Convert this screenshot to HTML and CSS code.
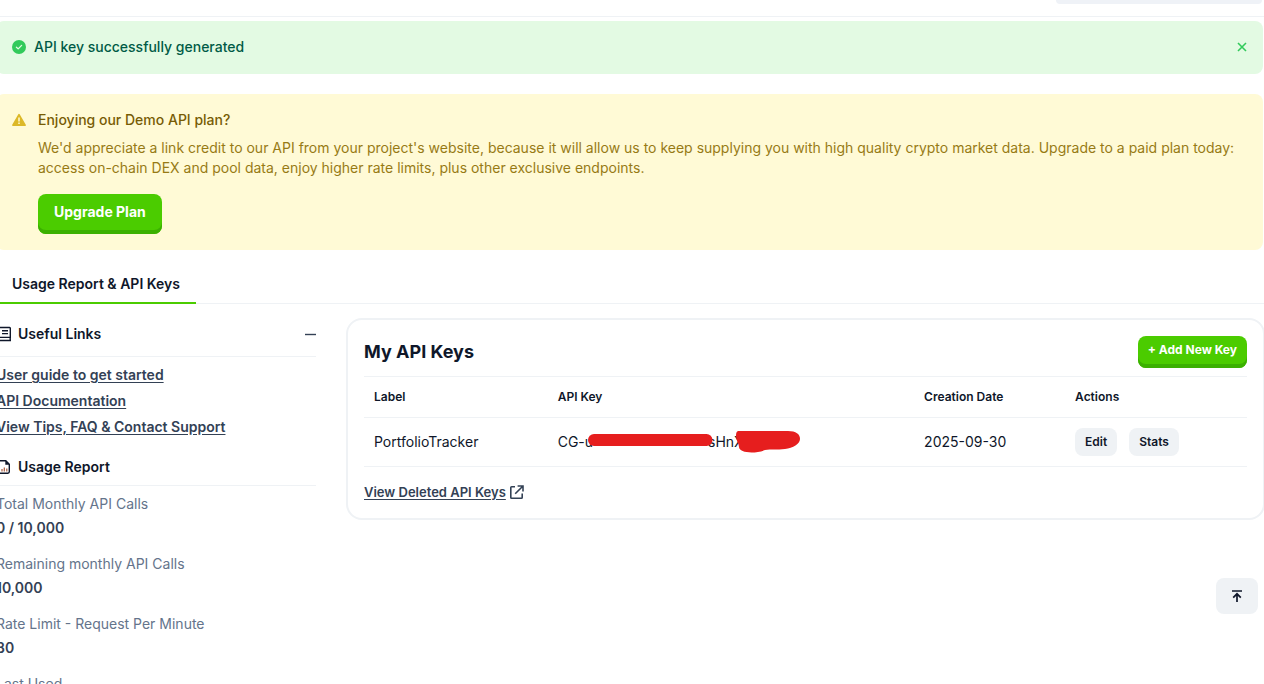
FILE: index.html
```html
<!DOCTYPE html>
<html lang="en">
<head>
<meta charset="utf-8">
<title>Developer Dashboard</title>
<link rel="stylesheet" href="styles.css">
</head>
<body>
<div class="page">
  <header class="topbar"><div class="topbar-search"></div></header>
  <main>
    <div class="alert alert-success" role="status">
      <svg class="icon-alert" viewBox="0 0 14 14" aria-hidden="true"><circle cx="7" cy="7" r="7" fill="#32ca5b"/><path d="M4.4 7.2l1.8 1.7 3.4-3.5" fill="none" stroke="#e3fae3" stroke-width="1.3" stroke-linecap="round" stroke-linejoin="round"/></svg>
      <p class="alert-text">API key successfully generated</p>
      <button class="close" type="button" aria-label="Dismiss"><svg width="10" height="10" viewBox="0 0 10 10" aria-hidden="true"><path d="M1 1l8 8M9 1L1 9" stroke="#32ca5b" stroke-width="1.6" fill="none"/></svg></button>
    </div>
    <section class="alert alert-warning">
      <svg class="icon-alert" viewBox="0 0 14 14" aria-hidden="true"><path d="M7 1.6L13.1 12.2H.9z" fill="#dcb828" stroke="#dcb828" stroke-width="1.6" stroke-linejoin="round"/><path d="M7 4.6v3.8M7 9.6v1.5" stroke="#fffad6" stroke-width="1.5"/></svg>
      <div class="promo">
        <h2 class="promo-title">Enjoying our Demo API plan?</h2>
        <p class="promo-text">We'd appreciate a link credit to our API from your project's website, because it will allow us to keep supplying you with high quality crypto market data. Upgrade to a paid plan today: access on-chain DEX and pool data, enjoy higher rate limits, plus other exclusive endpoints.</p>
        <button class="btn" type="button">Upgrade Plan</button>
      </div>
    </section>
    <nav class="tabs"><a class="tab" href="#usage">Usage Report &amp; API Keys</a></nav>
    <div class="columns" id="usage">
      <aside class="sidebar">
        <div class="side-head links-head">
          <svg width="16" height="16" viewBox="0 0 16 16" fill="none" stroke="#0f172a" stroke-width="1.4" aria-hidden="true"><path d="M14.3 11V2.2a.7.7 0 0 0-.7-.7H4a2 2 0 0 0-2 2v9M15 11.4H3.6a1.5 1.5 0 0 0 0 3.1H15M14.2 11.4v3M6 4.8h6M6 7.6h6"/></svg>
          <h3 class="side-title">Useful Links</h3>
          <button class="collapse" type="button" aria-label="Collapse"><svg width="11" height="10" viewBox="0 0 11 10" aria-hidden="true"><path d="M0 5.5h11" stroke="#334155" stroke-width="1.4"/></svg></button>
        </div>
        <ul class="links">
          <li><a href="#guide">User guide to get started</a></li>
          <li><a href="#docs">API Documentation</a></li>
          <li><a href="#support">View Tips, FAQ &amp; Contact Support</a></li>
        </ul>
        <div class="side-head">
          <svg width="16" height="16" viewBox="0 0 16 16" aria-hidden="true"><path d="M4.4 1.7h5.4l3.5 3.5v7.6a1.4 1.4 0 0 1-1.4 1.4H4.4A1.4 1.4 0 0 1 3 12.8V3.1a1.4 1.4 0 0 1 1.4-1.4z" fill="none" stroke="#0f172a" stroke-width="1.4"/><path d="M9.3 1.5v4.2h4.2z" fill="#0f172a"/><path d="M6 10v2.6M8.3 8.4v4.2M10.8 9.4v3.2" stroke="#a85a3c" stroke-width="1.2"/></svg>
          <h3 class="side-title">Usage Report</h3>
        </div>
        <dl class="stats">
          <div class="stat"><dt>Total Monthly API Calls</dt><dd>0 / 10,000</dd></div>
          <div class="stat"><dt>Remaining monthly API Calls</dt><dd>10,000</dd></div>
          <div class="stat"><dt>Rate Limit - Request Per Minute</dt><dd>30</dd></div>
          <div class="stat"><dt>Last Used</dt><dd>-</dd></div>
        </dl>
      </aside>
      <section class="card">
        <div class="card-head">
          <h2 class="card-title">My API Keys</h2>
          <button class="btn btn-small" type="button">+ Add New Key</button>
        </div>
        <table class="keys">
          <colgroup><col class="col-label"><col class="col-key"><col class="col-date"><col></colgroup>
          <thead><tr><th scope="col">Label</th><th scope="col">API Key</th><th scope="col">Creation Date</th><th scope="col">Actions</th></tr></thead>
          <tbody><tr>
            <td>PortfolioTracker</td>
            <td><div class="key"><span>CG-u</span><span class="key-end">sHnX</span>
              <svg class="redaction" width="214" height="24" viewBox="0 0 214 24" aria-hidden="true"><path d="M6 4H118.500a6 6 0 0 1 0 12H6A6 6 0 0 1 6 4z" fill="#e61e1e"/><path d="M151 1H200C208 1 212 4 212 9C212 14 205 18 197 19C189 20 183 19 177 20C167 24 151 23 151 17C151 14 148 10 148 6C148 2 149 1 151 1z" fill="#e61e1e"/></svg></div></td>
            <td>2025-09-30</td>
            <td><div class="actions"><button class="chip" type="button">Edit</button><button class="chip" type="button">Stats</button></div></td>
          </tr></tbody>
        </table>
        <a class="deleted" href="#deleted"><span class="deleted-text">View Deleted API Keys</span><svg width="14" height="14" viewBox="0 0 14 14" fill="none" stroke="#334155" stroke-width="1.6" aria-hidden="true"><path d="M5 1.8H1.6a.8.8 0 0 0-.8.8v9.8a.8.8 0 0 0 .8.8h9.8a.8.8 0 0 0 .8-.8V8.6M7.6 1h5.4v5.4M13 1L5.2 8.800"/></svg></a>
      </section>
    </div>
  </main>
  <button class="to-top" type="button" aria-label="Back to top"><svg width="12" height="14" viewBox="0 0 12 14" fill="none" stroke="#0f172a" stroke-width="1.7" aria-hidden="true"><path d="M1 2h10M6 13V5M2.2 8.600L6 4.8l3.8 3.8"/></svg></button>
</div>
</body>
</html>
```

FILE: styles.css
```css
* { box-sizing: border-box; }

body {
  margin: 0;
  height: 100vh;
  overflow: hidden;
  background: #fff;
  color: #0f172a;
  font: 400 14px/20px Inter, "Liberation Sans", sans-serif;
}

h2, h3, p, ul, dl, dd { margin: 0; padding: 0; }
button { border: 0; padding: 0; background: none; font: inherit; color: inherit; cursor: pointer; }
svg { flex: none; display: block; }

/* The dashboard bleeds slightly past both edges of the window. */
.page { margin: 0 -1px 0 -4px; }

.topbar { height: 17px; border-bottom: 1px solid #eff2f5; padding-right: 3px; }
.topbar-search { width: 206px; height: 4px; margin-left: auto; border-radius: 0 0 8px 8px; background: #eff2f7; }

.alert { display: flex; border-radius: 8px; padding: 16px; margin-right: 2px; }
.alert-success { margin-top: 4px; min-height: 53px; gap: 8px; background: #e3fae3; color: #005a46; font-weight: 500; }
.alert-warning { margin-top: 20px; gap: 12px; background: #fffad6; color: #977a15; }
.alert-text { flex: 1; }
.icon-alert { width: 14px; height: 14px; margin-top: 3px; }
.close { height: 20px; }

.promo-title { font-size: 14px; font-weight: 500; color: #775c05; }
.promo-text { margin: 8px 0 16px; }

.btn {
  display: block;
  height: 40px;
  padding: 0 16px 4px;
  border-radius: 8px;
  background: #4bcc00;
  box-shadow: inset 0 -4px #3bb001;
  color: #fff;
  font-weight: 700;
}
.btn-small { height: 32px; padding: 0 10px 4px; font-size: 12px; }

.tabs { display: flex; margin-top: 14px; border-bottom: 1px solid #eff2f5; }
.tab { padding: 10px 16px 8px; margin-bottom: -1px; border-bottom: 2px solid #4bcc00; color: #0f172a; font-weight: 600; text-decoration: none; }

.columns { display: flex; align-items: flex-start; gap: 30px; padding-top: 14px; }
.sidebar { flex: 0 0 320px; }
.side-head { display: flex; align-items: center; gap: 6px; padding-bottom: 8px; border-bottom: 1px solid #eff2f5; }
.links-head { padding: 6px 0 12px; }
.side-title { flex: 1; font-size: 14px; font-weight: 600; }
.links { display: grid; gap: 6px; padding: 8px 0 20px; list-style: none; }
.links a { color: #334155; font-weight: 600; text-underline-offset: 2px; }

.stats { display: grid; gap: 16px; padding-top: 8px; }
.stat { display: grid; gap: 4px; }
.stat dt { color: #64748b; }
.stat dd { color: #334155; font-weight: 600; }

.card { flex: 1; border: 2px solid #eff2f5; border-radius: 16px; padding: 16px; }
.card-head { display: flex; align-items: center; justify-content: space-between; padding-bottom: 8px; }
.card-title { font-size: 18px; line-height: 28px; font-weight: 700; }

.keys { width: 100%; table-layout: fixed; border-collapse: separate; border-spacing: 0; border-top: 1px solid #eff2f5; }
.col-label { width: 20.8%; }
.col-key { width: 41.5%; }
.col-date { width: 17.1%; }
.keys th, .keys td { padding: 10px; border-bottom: 1px solid #eff2f5; text-align: left; }
.keys th { height: 41px; font-size: 12px; font-weight: 600; }
.keys td { height: 49px; }

.key { position: relative; display: flex; gap: 115px; }
.redaction { position: absolute; left: 30px; top: -2px; }
.actions { display: flex; gap: 12px; }
.chip { height: 28px; padding: 0 10px; border-radius: 8px; background: #eff2f5; font-size: 12px; font-weight: 600; }

.deleted { display: flex; align-items: center; gap: 4px; margin-top: 15px; width: fit-content; color: #334155; font-size: 13px; font-weight: 600; text-decoration: none; }
.deleted-text { text-decoration: underline; text-underline-offset: 2px; }

.to-top { position: fixed; right: 6px; bottom: 70px; width: 42px; height: 36px; border-radius: 8px; background: #eff2f5; display: grid; place-items: center; }
```
